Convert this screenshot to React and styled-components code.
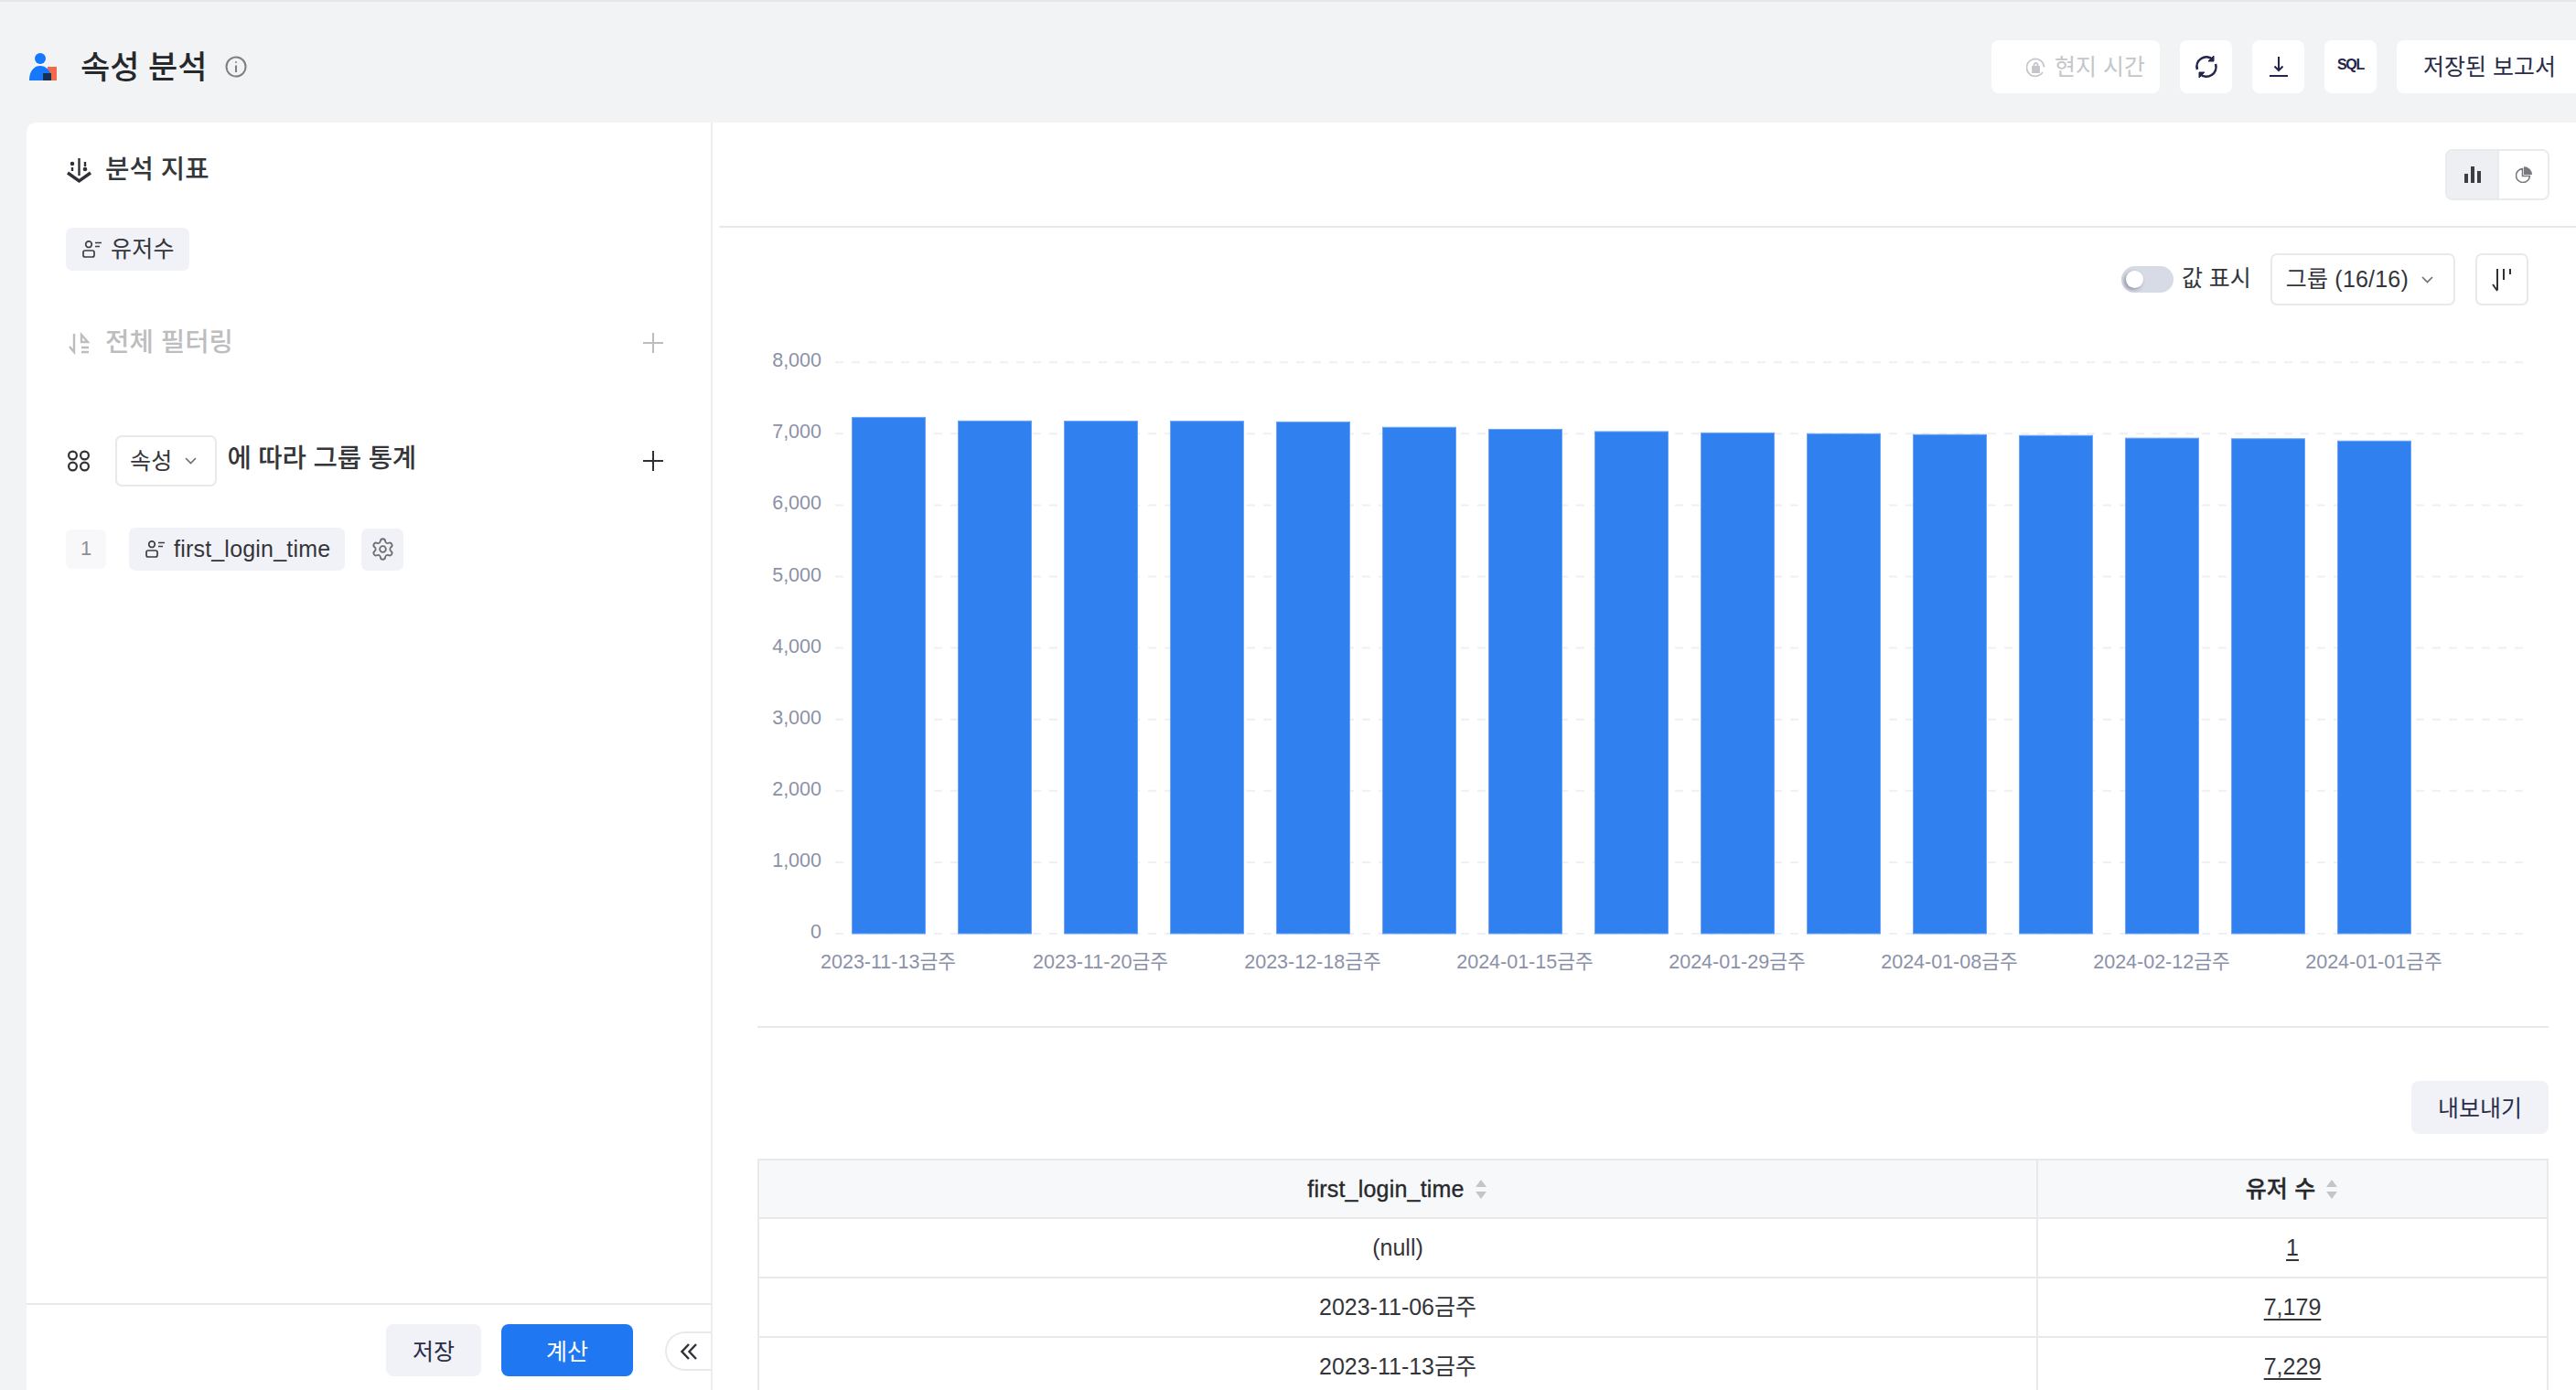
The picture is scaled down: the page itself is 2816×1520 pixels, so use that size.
import React from "react";
import styled, { createGlobalStyle } from "styled-components";
import { Settings } from "lucide-react";

const FONT = `"Liberation Sans", "Noto Sans CJK KR", "Noto Sans", sans-serif`;

const GlobalStyle = createGlobalStyle`
  html, body {
    margin: 0;
    padding: 0;
    background: #f2f3f5;
  }
  body {
    font-family: ${FONT};
    font-size: 25px;
    line-height: 1.3;
    color: #2f3136;
  }
  * {
    box-sizing: border-box;
  }
`;

const BARS = [7229, 7179, 7176, 7175, 7165, 7090, 7062, 7030, 7012, 7000, 6988, 6975, 6938, 6930, 6898];
const TICKS = [0, 1000, 2000, 3000, 4000, 5000, 6000, 7000, 8000];
const X_LABELS = [
  "2023-11-13금주",
  "2023-11-20금주",
  "2023-12-18금주",
  "2024-01-15금주",
  "2024-01-29금주",
  "2024-01-08금주",
  "2024-02-12금주",
  "2024-01-01금주",
];
const ROWS = [
  ["(null)", "1"],
  ["2023-11-06금주", "7,179"],
  ["2023-11-13금주", "7,229"],
];

const Y_ZERO = 1021;
const Y_UNIT = 0.0781;

const Page = styled.div`
  width: 2816px;
  height: 1520px;
  display: flex;
  flex-direction: column;
  overflow: hidden;
  border-top: 2px solid #e6e7eb;
`;

const Header = styled.header`
  height: 132px;
  flex: none;
  display: flex;
  align-items: center;
  padding: 10px 0 0 32px;
  margin-right: -7px;
`;

const Title = styled.h1`
  margin: 2px 0 0 26px;
  font-size: 35px;
  font-weight: 500;
  color: #26282c;
`;

const InfoIcon = styled.svg`
  width: 24px;
  height: 24px;
  margin-left: 19px;
  color: #7d7f84;
`;

const Actions = styled.div`
  margin-left: auto;
  display: flex;
  align-items: center;
  gap: 22px;
`;

const HeaderButton = styled.div`
  height: 58px;
  min-width: 57px;
  padding: 0 ${(p) => (p.$wide ? "29px" : "0")};
  background: #fff;
  border-radius: 8px;
  display: flex;
  align-items: center;
  justify-content: center;
  gap: 10px;
  font-size: 25px;
  color: ${(p) => (p.$muted ? "#c5c6c9" : "#2a2d4a")};
  ${(p) => p.$muted && "padding: 0 16px 0 38px;"}
`;

const SqlMark = styled.span`
  font-size: 16px;
  font-weight: 700;
  letter-spacing: -1.2px;
  margin-bottom: 3px;
  color: #23264a;
`;

const Body = styled.div`
  flex: 1;
  min-height: 0;
  display: flex;
  margin-left: 29px;
`;

const Sidebar = styled.aside`
  width: 750px;
  flex: none;
  background: #fff;
  border-right: 2px solid #eceded;
  border-top-left-radius: 10px;
  display: flex;
  flex-direction: column;
  padding-top: 37px;
  position: relative;
`;

const SectionRow = styled.div`
  display: flex;
  align-items: center;
  height: ${(p) => p.$height || 30}px;
  margin-top: ${(p) => p.$top || 0}px;
  padding: 0 52px 0 43px;
`;

const SectionIcon = styled.svg`
  width: 28px;
  height: 30px;
  flex: none;
  margin-right: ${(p) => p.$gap || 15}px;
  color: ${(p) => (p.$muted ? "#bdbdbf" : "#2f3136")};
`;

const SectionTitle = styled.span`
  font-size: 28.7px;
  font-weight: 500;
  color: ${(p) => (p.$muted ? "#bdbdbf" : "#34363a")};
`;

const PlusIcon = styled.svg`
  width: 22px;
  height: 22px;
  margin-left: auto;
  flex: none;
  color: ${(p) => (p.$muted ? "#bdbdbf" : "#2f3136")};
`;

const Tag = styled.div`
  display: inline-flex;
  align-items: center;
  gap: 10px;
  height: 47px;
  padding: 0 16px 0 18px;
  background: #f1f2f7;
  border-radius: 7px;
  font-size: 25px;
  letter-spacing: 0.2px;
  color: #33353a;
`;

const UserMark = styled.svg`
  width: 21px;
  height: 19px;
  flex: none;
  color: #3c3e44;
`;

const SelectBox = styled.div`
  display: inline-flex;
  align-items: center;
  gap: 14px;
  height: ${(p) => p.$height || 56}px;
  padding: 0 ${(p) => (p.$wide ? 22 : 20)}px 0 ${(p) => (p.$wide ? 15 : 14)}px;
  border: 2px solid #e8e9ed;
  border-radius: 7px;
  background: #fff;
  font-size: 25px;
  letter-spacing: 0.2px;
  color: #33353a;
`;

const Chevron = styled.svg`
  width: 13px;
  height: 8px;
  flex: none;
  color: #6f7278;
`;

const GroupHint = styled(SectionTitle)`
  margin-left: 11px;
  padding-bottom: 4px;
  letter-spacing: -0.2px;
`;

const IndexBox = styled.div`
  width: 44px;
  height: 43px;
  background: #f8f8fa;
  border-radius: 6px;
  display: flex;
  align-items: center;
  justify-content: center;
  font-size: 22px;
  color: #8c8e93;
  margin-right: 25px;
`;

const GearBox = styled.div`
  width: 46px;
  height: 46px;
  margin-left: 18px;
  background: #f1f2f7;
  border-radius: 7px;
  display: flex;
  align-items: center;
  justify-content: center;
  color: #6c6e74;
`;

const SideFooter = styled.div`
  margin-top: auto;
  height: 95px;
  border-top: 2px solid #e9e9ea;
  padding: 21px 85px 0 0;
  display: flex;
  justify-content: flex-end;
  gap: 22px;
`;

const SoftButton = styled.div`
  width: ${(p) => p.$width}px;
  height: 57px;
  padding-top: 3px;
  border-radius: 8px;
  background: ${(p) => (p.$primary ? "#1f78f2" : "#f1f2f7")};
  color: ${(p) => (p.$primary ? "#fff" : "#2a2d4a")};
  display: flex;
  align-items: center;
  justify-content: center;
  font-size: 25px;
`;

const CollapseTab = styled.div`
  position: absolute;
  right: 0;
  bottom: 21px;
  width: 50px;
  height: 43px;
  background: #fff;
  border: 2px solid #e9e9ea;
  border-right: 0;
  border-radius: 22px 0 0 22px;
  display: flex;
  align-items: center;
  padding-left: 15px;
  color: #2f3136;
`;

const Main = styled.main`
  flex: 1;
  min-width: 0;
  background: #fff;
  display: flex;
  flex-direction: column;
`;

const ChartTypeBar = styled.div`
  height: 115px;
  flex: none;
  margin-left: 7px;
  padding: 29px 29px 0 0;
  border-bottom: 2px solid #e9e9ea;
  display: flex;
  justify-content: flex-end;
  align-items: flex-start;
`;

const Segmented = styled.div`
  display: flex;
  height: 56px;
  border: 2px solid #e9eaee;
  border-radius: 8px;
  overflow: hidden;
`;

const Segment = styled.div`
  width: 55px;
  display: flex;
  align-items: center;
  justify-content: center;
  background: ${(p) => (p.$active ? "#eeeff3" : "#fff")};
  color: ${(p) => (p.$active ? "#3c3e44" : "#77797e")};
  & + & {
    border-left: 2px solid #e9eaee;
  }
`;

const Content = styled.div`
  padding: 0 30px 0 49px;
  display: flex;
  flex-direction: column;
`;

const ChartControls = styled.div`
  display: flex;
  align-items: center;
  justify-content: flex-end;
  margin-top: 28px;
  height: 57px;
  padding-right: 22px;
`;

const Toggle = styled.div`
  width: 57px;
  height: 29px;
  border-radius: 15px;
  background: #d7dbe6;
  position: relative;
  &::after {
    content: "";
    position: absolute;
    left: 5px;
    top: 5px;
    width: 19px;
    height: 19px;
    border-radius: 50%;
    background: #fff;
    box-shadow: -2px 2px 4px rgba(60, 60, 70, 0.45);
  }
`;

const ToggleLabel = styled.span`
  margin: 0 21px 2px 9px;
  font-size: 25px;
  color: #33353a;
`;

const SortButton = styled.div`
  width: 58px;
  height: 57px;
  margin-left: 22px;
  border: 2px solid #e8e9ed;
  border-radius: 7px;
  display: flex;
  align-items: center;
  justify-content: center;
  color: #2f3136;
`;

const ChartFrame = styled.div`
  height: 790px;
  border-bottom: 2px solid #e9e9ea;
`;

const ChartSvg = styled.svg`
  display: block;
  width: 1958px;
  height: 788px;
  font-family: ${FONT};
  font-size: 21.5px;
  fill: #8b91a8;
`;

const ExportRow = styled.div`
  display: flex;
  justify-content: flex-end;
  margin-top: 58px;
`;

const ExportButton = styled(SoftButton)`
  height: 58px;
`;

const Table = styled.table`
  margin-top: 27px;
  width: 1958px;
  border-collapse: collapse;
  table-layout: fixed;
  font-size: 25px;
  color: #33353a;
`;

const HeadCell = styled.th`
  height: 64px;
  padding: 0;
  background: #f7f8fa;
  border: 2px solid #e8e9ec;
  font-weight: 500;
  color: #26282c;
  letter-spacing: 0.2px;
  -webkit-text-stroke: 0.35px #26282c;
  width: ${(p) => p.$width || "auto"};
`;

const HeadInner = styled.span`
  display: inline-flex;
  align-items: center;
  gap: 10px;
`;

const SortCarets = styled.svg`
  width: 16px;
  height: 26px;
  color: #c4c5c8;
`;

const Cell = styled.td`
  height: 65px;
  padding: 0;
  text-align: center;
  border: 2px solid #e8e9ec;
  text-decoration: ${(p) => (p.$link ? "underline" : "none")};
  text-underline-offset: 4px;
`;

const Logo = () => (
  <svg width="30" height="30" viewBox="0 0 30 30">
    <rect x="20" y="15" width="10" height="15" fill="#f0694a" />
    <circle cx="12" cy="6" r="6" fill="#1677ff" />
    <path d="M0 30 C0 20 5 14 12 14 C17 14 21 17 23 22 L15 22 L15 30 Z" fill="#1677ff" />
    <rect x="15" y="22" width="9" height="8" fill="#16304f" />
  </svg>
);

const Info = () => (
  <InfoIcon viewBox="0 0 24 24" fill="none" stroke="currentColor" strokeWidth="2">
    <circle cx="12" cy="12" r="10.5" />
    <path d="M12 10.5V18" />
    <circle cx="12" cy="7" r="1" fill="currentColor" stroke="none" />
  </InfoIcon>
);

const UserGlyph = () => (
  <UserMark viewBox="0 0 21 19" fill="none" stroke="currentColor" strokeWidth="1.7">
    <circle cx="7" cy="4.200" r="3.300" />
    <rect x="1" y="11" width="12" height="7" rx="2" />
    <path d="M14 2.500h7M14 6.500h5" />
  </UserMark>
);

const ChevronDown = () => (
  <Chevron viewBox="0 0 13 8" fill="none" stroke="currentColor" strokeWidth="1.7">
    <path d="M1 1l5.500 5.500L12 1" />
  </Chevron>
);

const Plus = ({ muted }) => (
  <PlusIcon $muted={muted} viewBox="0 0 22 22" fill="none" stroke="currentColor" strokeWidth="2">
    <path d="M11 0v22M0 11h22" />
  </PlusIcon>
);

const Carets = () => (
  <SortCarets viewBox="0 0 16 26" fill="currentColor">
    <path d="M8 3l6 8H2zM8 24l-6-8h12z" />
  </SortCarets>
);

const Chart = () => (
  <ChartSvg viewBox="828 334 1958 788">
    {TICKS.map((t) => {
      const y = Y_ZERO - t * Y_UNIT;
      return (
        <g key={t}>
          <line x1="913" x2="2765" y1={y} y2={y} stroke="#eff0f5" strokeWidth="2" strokeDasharray="9 9" />
          <text x="898" y={y + 5} textAnchor="end">
            {t.toLocaleString("en-US")}
          </text>
        </g>
      );
    })}
    {BARS.map((v, i) => (
      <rect
        key={i}
        x={931.5 + i * 116}
        y={Y_ZERO - v * Y_UNIT}
        width="80"
        height={v * Y_UNIT}
        fill="#3180f0"
        stroke="#6aa5f8"
        strokeWidth="1"
      />
    ))}
    {X_LABELS.map((label, i) => (
      <text key={label} x={971 + i * 232} y="1059" textAnchor="middle">
        {label}
      </text>
    ))}
  </ChartSvg>
);

export default function App() {
  return (
    <>
      <GlobalStyle />
      <Page>
        <Header>
          <Logo />
          <Title>속성 분석</Title>
          <Info />
          <Actions>
            <HeaderButton $muted>
              <svg width="21" height="21" viewBox="0 0 21 21" fill="none" stroke="#c5c6c9" strokeWidth="1.8">
                <path d="M18 16a9.500 9.500 0 1 1 1.500-5.500" />
                <path d="M7 10h7v6H7z" fill="#c5c6c9" />
                <path d="M8.500 10V8a2 2 0 0 1 4 0v2" />
              </svg>
              현지 시간
            </HeaderButton>
            <HeaderButton>
              <svg width="26" height="26" viewBox="0 0 26 26" fill="none" stroke="#23264a" strokeWidth="2.6">
                <path d="M3 16A10.500 10.500 0 0 1 20 5" />
                <path d="M23 10A10.500 10.500 0 0 1 6 21" />
                <path d="M21 1v6h-6z" fill="#23264a" strokeWidth="1" />
                <path d="M5 25v-6h6z" fill="#23264a" strokeWidth="1" />
              </svg>
            </HeaderButton>
            <HeaderButton>
              <svg width="20" height="22" viewBox="0 0 20 22" fill="none" stroke="#23264a" strokeWidth="2">
                <path d="M10 0v15M5.500 10.500L10 15l4.500-4.500M0 21h20" />
              </svg>
            </HeaderButton>
            <HeaderButton>
              <SqlMark>SQL</SqlMark>
            </HeaderButton>
            <HeaderButton $wide>저장된 보고서</HeaderButton>
          </Actions>
        </Header>
        <Body>
          <Sidebar>
            <SectionRow>
              <SectionIcon viewBox="0 0 28 30" fill="none" stroke="currentColor" strokeWidth="2.4">
                <path d="M2 18l12.500 9L27 18" strokeWidth="3.4" />
                <path d="M14.500 2v19" />
                <circle cx="7" cy="8" r="2.300" fill="currentColor" stroke="none" />
                <path d="M7 12v4" />
                <path d="M21 6v5" />
                <circle cx="21" cy="14" r="2.300" fill="currentColor" stroke="none" />
              </SectionIcon>
              <SectionTitle>분석 지표</SectionTitle>
            </SectionRow>
            <SectionRow $height={47} $top={48}>
              <Tag>
                <UserGlyph />
                유저수
              </Tag>
            </SectionRow>
            <SectionRow $top={64}>
              <SectionIcon $muted viewBox="0 0 28 30" fill="none" stroke="currentColor" strokeWidth="2.4">
                <path d="M9 5v20L4 19" />
                <path d="M17 6l7 8h-7z" />
                <path d="M17 20h8M17 25h8" />
              </SectionIcon>
              <SectionTitle $muted>전체 필터링</SectionTitle>
              <Plus muted />
            </SectionRow>
            <SectionRow $height={56} $top={86}>
              <SectionIcon $gap={26} viewBox="0 0 28 30" fill="none" stroke="currentColor" strokeWidth="2.2">
                <circle cx="7.500" cy="9" r="4.400" />
                <circle cx="20.500" cy="9" r="4.400" />
                <circle cx="7.500" cy="21" r="4.400" />
                <circle cx="20.500" cy="21" r="4.400" />
              </SectionIcon>
              <SelectBox>
                속성
                <ChevronDown />
              </SelectBox>
              <GroupHint>에 따라 그룹 통계</GroupHint>
              <Plus />
            </SectionRow>
            <SectionRow $height={47} $top={45}>
              <IndexBox>1</IndexBox>
              <Tag>
                <UserGlyph />
                first_login_time
              </Tag>
              <GearBox>
                <Settings size={27} strokeWidth={1.6} />
              </GearBox>
            </SectionRow>
            <SideFooter>
              <SoftButton $width={104}>저장</SoftButton>
              <SoftButton $width={144} $primary>
                계산
              </SoftButton>
            </SideFooter>
            <CollapseTab>
              <svg width="18" height="18" viewBox="0 0 18 18" fill="none" stroke="currentColor" strokeWidth="2.4">
                <path d="M9 1L1.500 9 9 17M17 1L9.500 9 17 17" />
              </svg>
            </CollapseTab>
          </Sidebar>
          <Main>
            <ChartTypeBar>
              <Segmented>
                <Segment $active>
                  <svg width="18" height="18" viewBox="0 0 18 18" fill="currentColor">
                    <rect x="0" y="8" width="4" height="10" />
                    <rect x="7" y="0" width="4" height="18" />
                    <rect x="14" y="5" width="4" height="13" />
                  </svg>
                </Segment>
                <Segment>
                  <svg width="18" height="18" viewBox="0 0 18 18" fill="none" stroke="currentColor" strokeWidth="1.6">
                    <path d="M7.500 2.500a7.500 7.500 0 1 0 8 8H7.500z" />
                    <path d="M9 0a9 9 0 0 1 9 9H9z" fill="currentColor" stroke="none" />
                  </svg>
                </Segment>
              </Segmented>
            </ChartTypeBar>
            <Content>
              <ChartControls>
                <Toggle />
                <ToggleLabel>값 표시</ToggleLabel>
                <SelectBox $height={57} $wide>
                  그룹 (16/16)
                  <ChevronDown />
                </SelectBox>
                <SortButton>
                  <svg width="22" height="28" viewBox="0 0 22 28" fill="none" stroke="currentColor" strokeWidth="2">
                    <path d="M6 2v23M1 19l5 7" />
                    <path d="M13 2v12M20 2v6" />
                  </svg>
                </SortButton>
              </ChartControls>
              <ChartFrame>
                <Chart />
              </ChartFrame>
              <ExportRow>
                <ExportButton $width={150}>내보내기</ExportButton>
              </ExportRow>
              <Table>
                <thead>
                  <tr>
                    <HeadCell $width="1398px">
                      <HeadInner>
                        first_login_time
                        <Carets />
                      </HeadInner>
                    </HeadCell>
                    <HeadCell>
                      <HeadInner>
                        유저 수
                        <Carets />
                      </HeadInner>
                    </HeadCell>
                  </tr>
                </thead>
                <tbody>
                  {ROWS.map(([name, count]) => (
                    <tr key={name}>
                      <Cell>{name}</Cell>
                      <Cell $link>{count}</Cell>
                    </tr>
                  ))}
                </tbody>
              </Table>
            </Content>
          </Main>
        </Body>
      </Page>
    </>
  );
}
